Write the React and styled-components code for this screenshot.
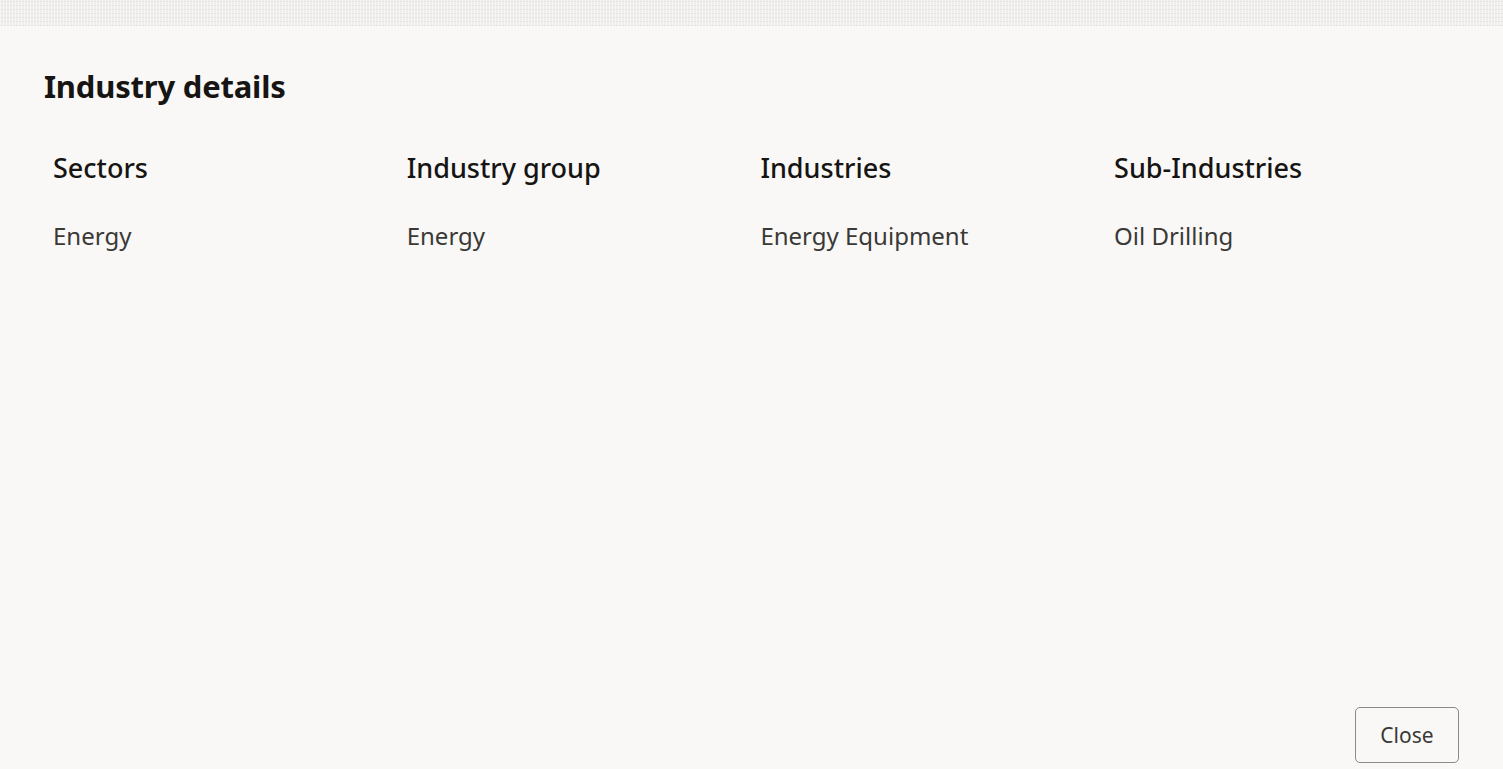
import React from 'react'
import styled, { createGlobalStyle } from 'styled-components'

const GlobalStyle = createGlobalStyle`
  html, body {
    margin: 0;
    padding: 0;
    background: #f9f8f6;
    font-family: "Noto Sans", "Open Sans", sans-serif;
    color: #161513;
  }
`

const columns = [
  { title: 'Sectors', value: 'Energy' },
  { title: 'Industry group', value: 'Energy' },
  { title: 'Industries', value: 'Energy Equipment' },
  { title: 'Sub-Industries', value: 'Oil Drilling' },
]

export default function App() {
  return (
    <>
      <GlobalStyle />
      <Page>
        <TextureStrip />
        <Dialog>
          <Title>Industry details</Title>
          <Grid>
            {columns.map((col) => (
              <Column key={col.title}>
                <ColumnTitle>{col.title}</ColumnTitle>
                <ColumnValue>{col.value}</ColumnValue>
              </Column>
            ))}
          </Grid>
          <Footer>
            <CloseButton>Close</CloseButton>
          </Footer>
        </Dialog>
      </Page>
    </>
  )
}

const Page = styled.div`
  height: 769px;
  display: flex;
  flex-direction: column;
  overflow: hidden;
`

const TextureStrip = styled.div`
  height: 26px;
  flex: 0 0 26px;
  background-color: #efeeec;
  background-image:
    repeating-linear-gradient(90deg, rgba(255, 255, 255, 0.55) 0 1px, transparent 1px 3px),
    repeating-linear-gradient(0deg, rgba(220, 218, 215, 0.5) 0 1px, transparent 1px 4px);
`

const Dialog = styled.div`
  flex: 1;
  display: flex;
  flex-direction: column;
  padding: 0 44px;
`

const Title = styled.h1`
  margin: 40px 0 0 0;
  font-size: 31px;
  font-weight: 700;
  line-height: 40px;
  letter-spacing: -0.2px;
`

const Grid = styled.div`
  display: grid;
  grid-template-columns: repeat(4, 353.7px);
  padding-left: 9px;
  margin-top: 42px;
`

const Column = styled.div`
  display: flex;
  flex-direction: column;
`

const ColumnTitle = styled.div`
  font-size: 27px;
  font-weight: 500;
  line-height: 40px;
`

const ColumnValue = styled.div`
  font-size: 24px;
  line-height: 30px;
  margin-top: 33px;
  color: #3a3936;
`

const Footer = styled.div`
  margin-top: auto;
  display: flex;
  justify-content: flex-end;
  margin-bottom: 6px;
`

const CloseButton = styled.button`
  width: 104px;
  height: 56px;
  background: transparent;
  border: 1px solid #8c8a86;
  border-radius: 5px;
  font-family: "Noto Sans", "Open Sans", sans-serif;
  font-size: 21px;
  color: #3a3936;
  cursor: pointer;
`
